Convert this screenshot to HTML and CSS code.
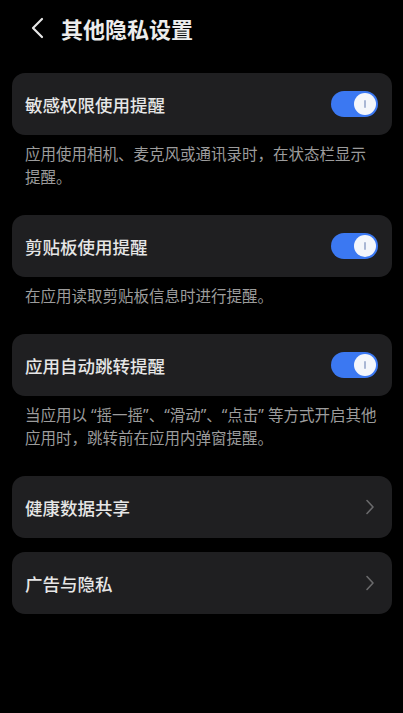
FILE: index.html
```html
<!DOCTYPE html>
<html>
<head>
    <title>其他隐私设置</title>
    <link rel="stylesheet" href="styles.css">
</head>
<body>
    <div class="header">
        <svg class="back" width="14" height="22" viewBox="0 0 14 22">
            <path d="M12 2 L3 11 L12 20" fill="none" stroke="#e6e6e6" stroke-width="2.2" stroke-linecap="round" stroke-linejoin="round"/>
        </svg>
        <h1>其他隐私设置</h1>
    </div>
    <div class="list">
        <div class="card">
            <span class="label">敏感权限使用提醒</span>
            <span class="switch"><span class="knob"></span></span>
        </div>
        <p class="desc">应用使用相机、麦克风或通讯录时，在状态栏显示提醒。</p>

        <div class="card">
            <span class="label">剪贴板使用提醒</span>
            <span class="switch"><span class="knob"></span></span>
        </div>
        <p class="desc">在应用读取剪贴板信息时进行提醒。</p>

        <div class="card">
            <span class="label">应用自动跳转提醒</span>
            <span class="switch"><span class="knob"></span></span>
        </div>
        <p class="desc">当应用以 “摇一摇”、“滑动”、“点击” 等方式开启其他应用时，跳转前在应用内弹窗提醒。</p>

        <div class="card">
            <span class="label">健康数据共享</span>
            <svg class="arrow" width="10" height="16" viewBox="0 0 10 16">
                <path d="M2 1.5 L8 8 L2 14.5" fill="none" stroke="#6a6a6c" stroke-width="1.6" stroke-linecap="round" stroke-linejoin="round"/>
            </svg>
        </div>
        <div class="card card-next">
            <span class="label">广告与隐私</span>
            <svg class="arrow" width="10" height="16" viewBox="0 0 10 16">
                <path d="M2 1.5 L8 8 L2 14.5" fill="none" stroke="#6a6a6c" stroke-width="1.6" stroke-linecap="round" stroke-linejoin="round"/>
            </svg>
        </div>
    </div>
</body>
</html>
```

FILE: styles.css
```css
body {
    margin: 0;
    background: #000;
    font-family: "Noto Sans CJK SC", "Noto Sans", sans-serif;
    color: #e8e8e8;
}
.header {
    height: 56px;
    display: flex;
    align-items: center;
    padding-left: 30px;
}
.header h1 {
    margin: 0 0 0 17px;
    font-size: 22px;
    font-weight: 700;
    color: #ececec;
}
.list {
    padding: 17px 11px 0 12px;
}
.card {
    height: 62px;
    background: #1f1f21;
    border-radius: 13px;
    display: flex;
    align-items: center;
    justify-content: space-between;
    padding: 0 14px 0 13px;
}
.card-next {
    margin-top: 14px;
}
.label {
    font-size: 17.5px;
    font-weight: 500;
    color: #e6e6e6;
}
.switch {
    width: 47px;
    height: 26px;
    border-radius: 13px;
    background: #3b78f2;
    display: flex;
    align-items: center;
    justify-content: flex-end;
    padding-right: 2px;
    box-sizing: border-box;
}
.knob {
    width: 22px;
    height: 22px;
    border-radius: 50%;
    background: #f4f6fb;
    display: flex;
    align-items: center;
    justify-content: center;
}
.knob::after {
    content: "";
    width: 2px;
    height: 8px;
    border-radius: 1px;
    background: #a9b6d4;
}
.arrow {
    margin-right: 3px;
}
.desc {
    margin: 0 0 26px 0;
    padding: 8px 12px 0 13px;
    font-family: "Noto Sans", "Noto Sans CJK SC", sans-serif;
    font-size: 15.5px;
    line-height: 23px;
    color: #9c9c9c;
}
```
